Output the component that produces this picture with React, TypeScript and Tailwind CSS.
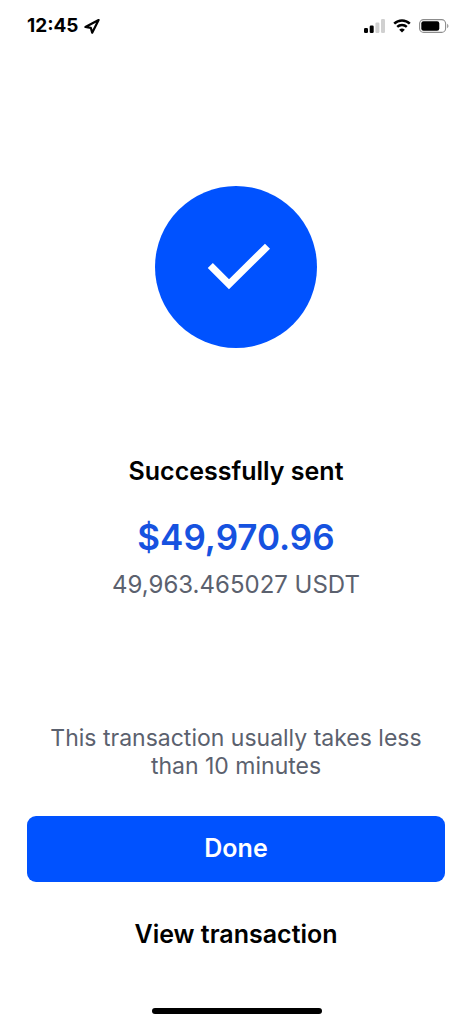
import React from "react";

function StatusBar() {
  return (
    <header className="flex h-13 items-center justify-between pr-6 pl-[27px]">
      <div className="flex items-center gap-1">
        <time className="text-[19px] font-bold">12:45</time>
        <svg width="18" height="18" viewBox="0 0 18 18" fill="none" role="img" aria-label="Location in use">
          <path
            d="M15.6 3 2.4 10l5.4.8 1.4 5z"
            stroke="#000"
            strokeWidth="2.2"
            strokeLinejoin="round"
          />
        </svg>
      </div>
      <div className="flex items-center gap-2">
        <svg width="21" height="14" viewBox="0 0 21 14" role="img" aria-label="Signal strength">
          <rect x="0" y="9" width="4" height="5" rx="1.2" fill="#000" />
          <rect x="5.7" y="6.5" width="4" height="7.5" rx="1.2" fill="#000" />
          <rect x="11.4" y="3.5" width="4" height="10.5" rx="1.2" fill="#d0d0d0" />
          <rect x="17" y="0" width="4" height="14" rx="1.2" fill="#d0d0d0" />
        </svg>
        <svg width="18" height="14" viewBox="0 0 18 14" fill="none" role="img" aria-label="Wi-Fi">
          <path d="M1.2 4.6a11.2 11.2 0 0 1 15.6 0" stroke="#000" strokeWidth="2.5" />
          <path d="M4.2 7.9a6.9 6.9 0 0 1 9.6 0" stroke="#000" strokeWidth="2.4" />
          <path d="M9 13.6 6.2 10.8a4 4 0 0 1 5.6 0z" fill="#000" />
        </svg>
        <svg width="30" height="14" viewBox="0 0 30 14" fill="none" role="img" aria-label="Battery">
          <rect x="0.6" y="0.6" width="26" height="12.8" rx="4" stroke="#8c8c8c" strokeWidth="1.1" />
          <rect x="2.3" y="2.3" width="18" height="9.4" rx="2.2" fill="#000" />
          <path d="M28.2 4.8c1.7.7 1.7 3.7 0 4.4z" fill="#8c8c8c" />
        </svg>
      </div>
    </header>
  );
}

export default function App() {
  return (
    <div className="flex min-h-screen flex-col bg-white font-['Inter','Liberation_Sans',sans-serif] text-black">
      <StatusBar />
      <main className="flex grow flex-col pt-[133px] pr-7 pl-[27px]">
        <svg
          className="mx-auto"
          width="164"
          height="164"
          viewBox="0 0 164 164"
          fill="none"
          role="img"
          aria-label="Success"
        >
          <circle cx="82" cy="82" r="81" fill="#0052ff" />
          <path d="M56.3 80.5 75 99.2 113.5 61.2" stroke="#fff" strokeWidth="7.2" />
        </svg>
        <section className="mt-26 flex flex-col items-center text-center">
          <h1 className="text-[25px] leading-9 font-semibold">Successfully sent</h1>
          <p className="mt-6 text-[35px] leading-12 font-semibold text-[#1652e0]">$49,970.96</p>
          <p className="mt-1.5 text-2xl leading-9 text-[#5b616e]">49,963.465027 USDT</p>
        </section>
        <footer className="mt-auto flex flex-col">
          <p className="mx-auto max-w-96 text-center text-[23px] leading-7 text-[#5b616e]">
            This transaction usually takes less than 10 minutes
          </p>
          <button type="button" className="mt-9 h-[66px] rounded-[9px] bg-[#0052ff] text-[25px] font-semibold text-white">
            Done
          </button>
          <button type="button" className="mt-5 h-[66px] text-[25px] font-semibold">
            View transaction
          </button>
        </footer>
      </main>
      <div className="mx-auto mt-10 mb-[10px] h-[6px] w-[170px] rounded-full bg-black" />
    </div>
  );
}
